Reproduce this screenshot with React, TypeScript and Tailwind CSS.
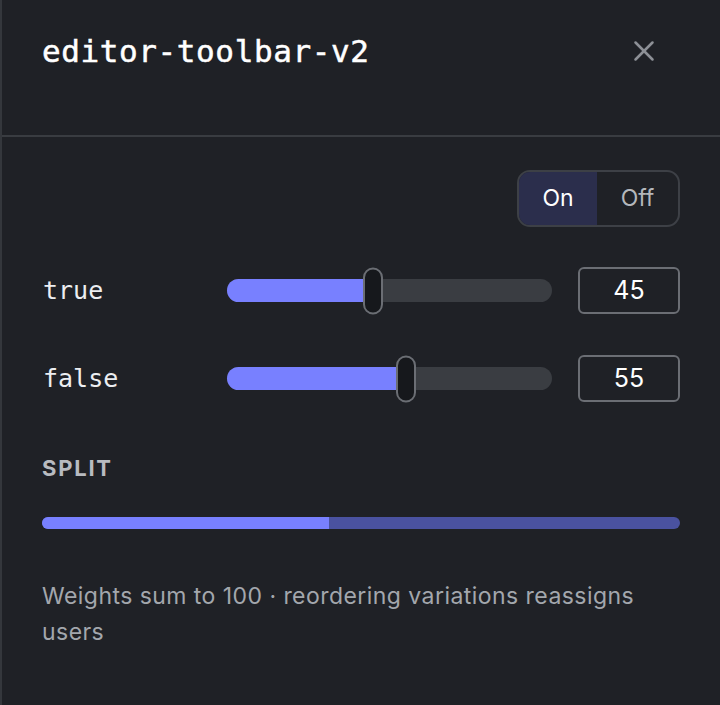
import { X } from "lucide-react";

type Variation = { key: string; weight: number };

const variations: Variation[] = [
  { key: "true", weight: 45 },
  { key: "false", weight: 55 },
];

const mono = { fontFamily: '"DejaVu Sans Mono", monospace' };
const sans = { fontFamily: 'Inter, "Noto Sans", sans-serif' };

function WeightSlider({ value }: { value: number }) {
  return (
    <div className="relative h-[23px] flex-1 rounded-full bg-[#3a3d42]">
      <div
        className="absolute inset-y-0 left-0 rounded-l-full bg-[#7880ff]"
        style={{ width: `${value}%` }}
      />
      <div
        className="absolute top-1/2 h-[47px] w-[20px] -translate-x-1/2 -translate-y-1/2 rounded-full border-2 border-[#6b6e74] bg-[#16181c]"
        style={{ left: `${value}%` }}
      />
    </div>
  );
}

function VariationRow({ variation }: { variation: Variation }) {
  return (
    <div className="flex h-[47px] items-center">
      <span className="w-[185px] pl-px text-[25px] text-[#eceef1]" style={mono}>
        {variation.key}
      </span>
      <WeightSlider value={variation.weight} />
      <div
        className="ml-[26px] flex h-[47px] w-[102px] items-center justify-center rounded-[6px] border-2 border-[#6b6e74] text-[25px] text-white"
        style={sans}
      >
        {variation.weight}
      </div>
    </div>
  );
}

export default function App() {
  const first = variations[0].weight;

  return (
    <div className="flex h-[705px] w-[720px] flex-col border-l-2 border-[#34373c] bg-[#1f2126]">
      {/* header */}
      <header className="flex h-[137px] shrink-0 items-start justify-between border-b-2 border-[#393c41] pl-[40px] pr-[59px] pt-[32px]">
        <h1
          className="text-[31px] font-normal leading-[38px] tracking-[0.6px] text-white [-webkit-text-stroke:0.5px_white]"
          style={mono}
        >
          editor-toolbar-v2
        </h1>
        <button className="mt-[2px] text-[#8d9096]">
          <X size={34} strokeWidth={1.8} />
        </button>
      </header>

      <section className="flex flex-col px-[40px] pt-[33px]">
        {/* on / off */}
        <div className="flex justify-end">
          <div
            className="flex h-[57px] overflow-hidden rounded-[13px] border-2 border-[#3d4046] text-[23px]"
            style={sans}
          >
            <span className="flex w-[78px] items-center justify-center bg-[#2b2e4c] text-white">
              On
            </span>
            <span className="flex w-[81px] items-center justify-center text-[#b4b7bc]">
              Off
            </span>
          </div>
        </div>

        <div className="mt-[40px] flex flex-col gap-[41px]">
          {variations.map((v) => (
            <VariationRow key={v.key} variation={v} />
          ))}
        </div>

        <h2
          className="mt-[53px] text-[22px] font-bold uppercase leading-[26px] tracking-[0.08em] text-[#b8bbc0]"
          style={sans}
        >
          Split
        </h2>

        <div className="mt-[36px] flex h-[12px] overflow-hidden rounded-full bg-[#4a52a0]">
          <div className="h-full bg-[#7880ff]" style={{ width: `${first}%` }} />
        </div>

        <p
          className="mt-[49px] text-[23px] leading-[36px] tracking-[0.45px] text-[#a3a7ad]"
          style={sans}
        >
          Weights sum to 100 · reordering variations reassigns users
        </p>
      </section>
    </div>
  );
}
